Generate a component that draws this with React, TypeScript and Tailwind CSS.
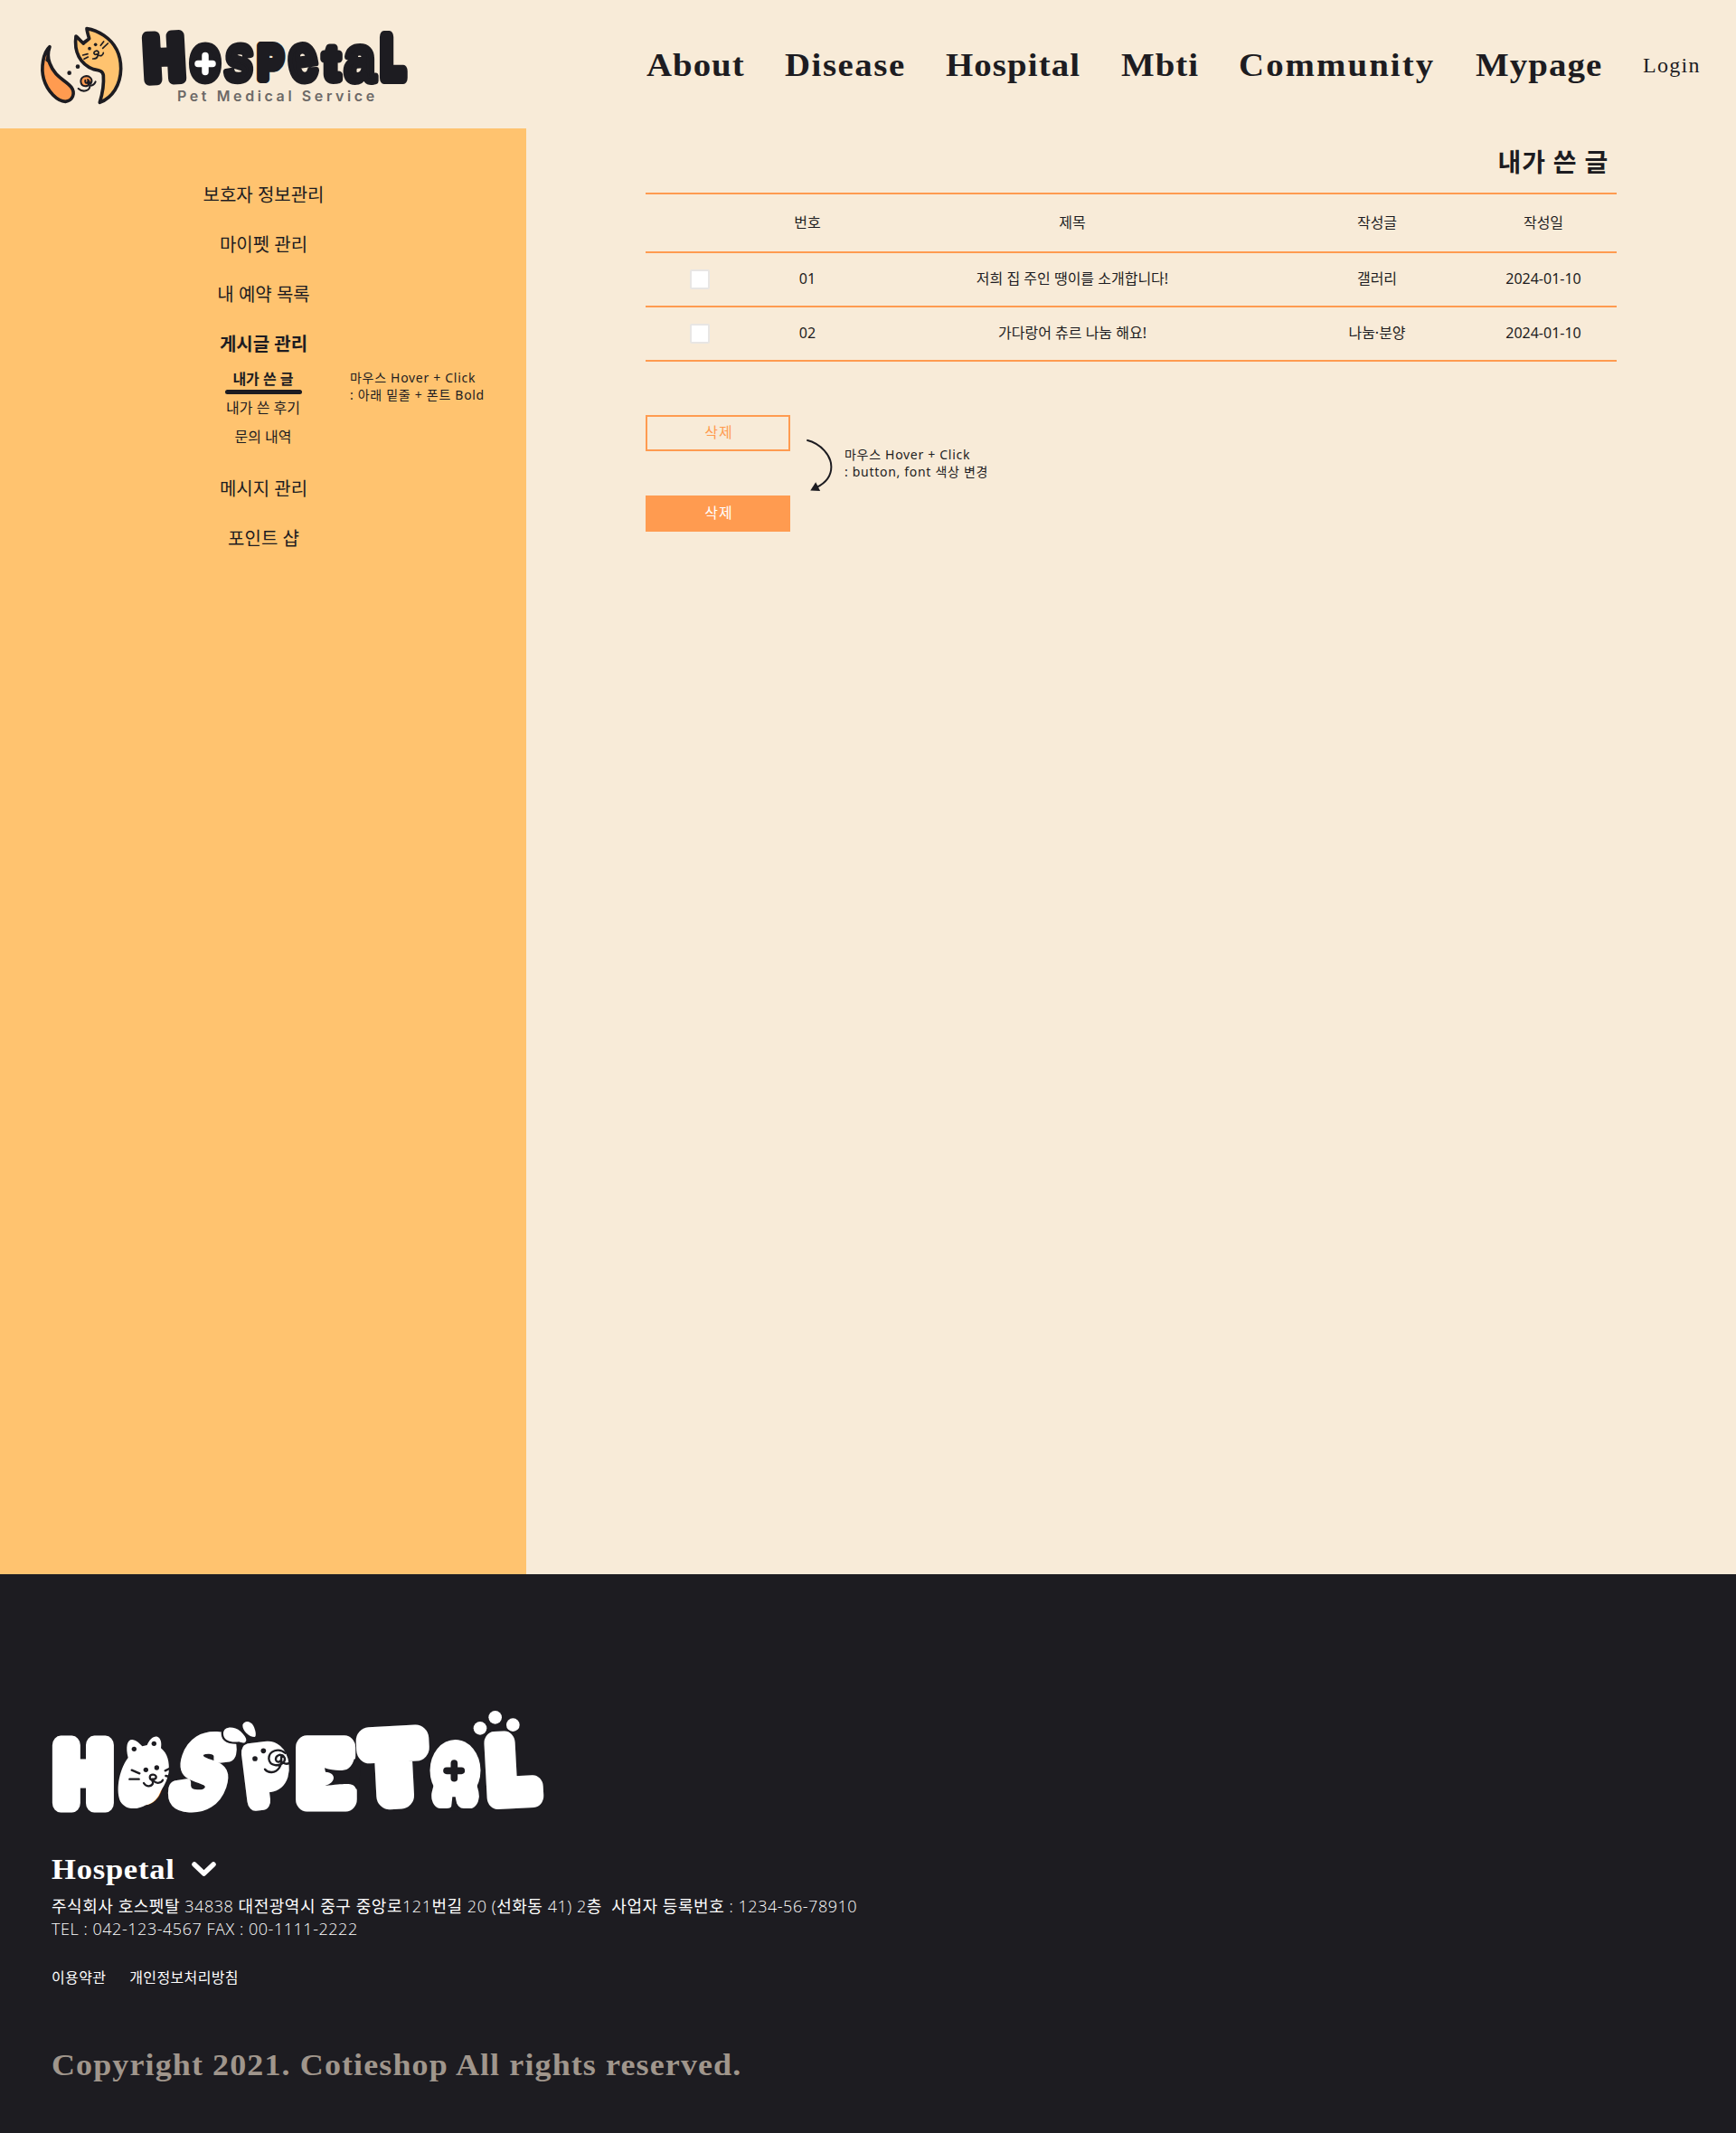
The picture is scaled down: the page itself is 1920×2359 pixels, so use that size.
import React from "react";

type Ink = [number, number, number];

/* Horizontal ink bounds and height of the bold sans letters, in em. */
const INK: Record<string, Ink> = {
  H: [0.067, 0.655, 0.688],
  O: [0.041, 0.736, 0.7],
  S: [0.03, 0.62, 0.7],
  P: [0.067, 0.62, 0.688],
  E: [0.067, 0.62, 0.688],
  T: [0.02, 0.59, 0.688],
  A: [0.0, 0.72, 0.688],
  L: [0.067, 0.585, 0.688],
  o: [0.04, 0.57, 0.54],
  s: [0.025, 0.52, 0.54],
  e: [0.035, 0.52, 0.54],
  t: [0.01, 0.32, 0.66],
  a: [0.035, 0.55, 0.54],
};

type LetterProps = {
  c: string;
  x: number;
  y: number;
  w: number;
  h: number;
  s: number;
  r?: number;
  k?: number;
};

/* One letter of a lettered logo, fitted into the box x, y, w, h. */
function Letter({ c, x, y, w, h, s, r = 0, k = 0 }: LetterProps) {
  const [a, b, cap] = INK[c];
  const size = (h - s) / cap;
  const sx = w / ((b - a) * size + s);
  const cx = x + w / 2;
  const cy = y + h / 2;
  const tx = -w / 2 - (a * size - s / 2) * sx;
  const ty = h / 2 - s / 2;
  return (
    <text
      transform={`translate(${cx} ${cy}) rotate(${r}) skewX(${k}) translate(${tx} ${ty}) scale(${sx} 1)`}
      fontSize={size}
      strokeWidth={s}
      strokeLinejoin="round"
      fontWeight={700}
      fill="currentColor"
      stroke="currentColor"
      className="font-['Liberation_Sans',sans-serif]"
    >
      {c}
    </text>
  );
}

function PetMark() {
  return (
    <svg viewBox="0 0 330 315" className="h-[105px] w-[110px] shrink-0" fill="none" stroke="#1d1c21" strokeLinecap="round" strokeLinejoin="round">
      <path
        d="M147 60 C154 65 160 74 172 84 C178 76 186 74 191 68 C188 58 184 46 183 35 C202 38 222 46 240 58 C278 84 296 124 296 168 C295 222 268 264 226 280 C238 240 240 214 238 190 C236 174 222 173 205 170 C160 152 140 112 147 60 Z"
        fill="#ffc36f"
        strokeWidth="11"
      />
      <path
        d="M60 95 C38 115 30 165 40 202 C52 244 86 276 112 277 C136 274 146 250 132 230 C112 204 78 198 60 150 C52 130 54 112 60 95 Z"
        fill="#ff9b50"
        strokeWidth="11"
      />
      <path d="M60 95 C54 112 52 130 60 150 L48 140 Z" fill="#1d1c21" strokeWidth="4" />
      <g fill="#1d1c21" stroke="none">
        <circle cx="125" cy="182" r="7" />
        <circle cx="153" cy="161" r="7" />
        <circle cx="192" cy="101" r="5.5" />
        <circle cx="212" cy="88" r="5.5" />
      </g>
      <g strokeWidth="5">
        <path d="M170 123 L186 119 M174 136 L187 129 M229 91 L239 78 M236 100 L253 84" />
        <path d="M220 121 C226 112 218 106 211 110 C203 115 208 123 215 120 C222 118 222 136 203 135" />
        <path d="M221 123 C230 128 238 123 238 115" />
      </g>
      <g strokeWidth="6">
        <path
          d="M196 218 C206 202 190 188 174 194 C158 201 160 224 178 226 C192 226 196 212 186 204"
          fill="#ff9b50"
        />
        <path d="M178 206 C176 216 182 219 186 211 C186 220 192 220 195 214 M155 234 C170 248 194 242 193 224 M193 224 C202 224 209 219 212 211" />
      </g>
    </svg>
  );
}

function HeaderWordmark() {
  return (
    <svg viewBox="-10 -20 320 106" className="mx-[-10px] mt-[-20px] mb-[-20px] h-[106px] w-[320px] overflow-visible text-[#1d1c21]" role="img" aria-label="Hospetal">
      <Letter c="H" x={4} y={4} w={47} h={60} s={13} r={-3} />
      <Letter c="o" x={55} y={16} w={36} h={47} s={10} />
      <Letter c="s" x={93} y={16} w={34} h={46} s={7} k={-4} />
      <Letter c="P" x={130} y={17} w={31} h={45} s={10} />
      <Letter c="e" x={164} y={16} w={34} h={47} s={7} r={-8} />
      <Letter c="t" x={200} y={18} w={25} h={44} s={9} />
      <Letter c="a" x={226} y={17} w={38} h={46} s={7} />
      <Letter c="L" x={266} y={5} w={31} h={58} s={14} />
      <path d="M73 31 V52 M64 41 H82" stroke="#1d1c21" strokeWidth="16" strokeLinecap="round" />
      <path d="M73 31.500 V49.500 M65 40.500 H81" stroke="#fff" strokeWidth="7.500" strokeLinecap="round" />
    </svg>
  );
}

function FooterWordmark() {
  return (
    <svg viewBox="50 1880 560 140" className="h-[140px] w-[560px] overflow-visible text-white" role="img" aria-label="Hospetal">
      <Letter c="H" x={58} y={1919} w={68} h={85} s={21} />
      <Letter c="O" x={136} y={1940} w={44} h={56} s={20} />
      <Letter c="S" x={193} y={1914} w={62} h={90} s={14} k={-16} r={3} />
      <Letter c="P" x={270} y={1926} w={50} h={75} s={22} r={-7} />
      <Letter c="E" x={327} y={1918} w={67} h={85} s={27} />
      <Letter c="T" x={396} y={1909} w={79} h={92} s={30} r={-3} />
      <ellipse cx={503.500} cy={1958} rx={28} ry={34} fill="#fff" />
      <Letter c="A" x={476} y={1925} w={55} h={75} s={28} />
      <Letter c="L" x={537} y={1914} w={63} h={86} s={26} r={-3} />

      <g transform="translate(50 1880) scale(.33333)">
        {/* cat */}
        <path
          d="M275 192 C266 155 272 130 290 132 C304 135 313 144 322 154 L338 150 C346 132 358 119 372 122 C384 127 387 142 384 160 C406 178 413 205 410 240 C404 280 374 324 336 347 C306 366 268 366 250 338 C234 306 242 236 275 192 Z"
          fill="#fff"
        />
        <g fill="#1d1c21">
          <circle cx="295" cy="163" r="8" />
          <circle cx="361" cy="145" r="8" />
          <circle cx="334" cy="232" r="8" />
          <circle cx="370" cy="225" r="8" />
          <circle cx="696" cy="195" r="8.500" />
          <circle cx="724" cy="169" r="8.500" />
        </g>
        <g fill="none" stroke="#1d1c21" strokeWidth="7" strokeLinecap="round" strokeLinejoin="round">
          <path d="M287 233 L313 244 M280 263 H311 M398 235 L412 228 M400 252 L412 255" />
          <path d="M359 267 C343 266 344 247 358 248 C373 250 370 264 357 263 C349 262 360 271 357 278 C350 290 334 288 327 276 M361 270 C370 279 386 276 390 266" />
          <path d="M788 188 C782 177 764 184 765 198 C768 212 787 206 783 188 C782 176 801 191 793 204 C778 224 744 220 742 195 C742 169 775 157 797 177 M783 196 C785 204 784 214 776 226 C763 244 740 244 729 230 M789 208 C798 214 808 212 814 207" />
        </g>
        {/* dog ears */}
        <g fill="#fff" stroke="#1d1c21" strokeWidth="14" paintOrder="stroke">
          <path d="M591 110 C593 88 625 86 648 104 C662 117 670 129 666 137 C662 145 653 143 643 139 C611 142 590 132 591 110 Z" />
          <path d="M655 83 C661 68 680 68 691 86 C699 103 701 119 695 123 C676 123 654 102 655 83 Z" />
        </g>
      </g>
      <g transform="translate(320 1880) scale(.33333)">
        <path d="M117 226 C145 235 180 238 195 228 C208 219 212 205 216 195 L236 210 L232 300 L221 295 C214 276 200 275 118 285 C155 275 158 242 120 239 Z" fill="#1d1c21" />
        <path d="M547 210 V260 M522 235 H571" stroke="#1d1c21" strokeWidth="23" strokeLinecap="round" />
        <path d="M536 368 L541 322 H551 L560 368 Z" fill="#1d1c21" />
        <circle cx="633" cy="94" r="22" fill="#fff" />
        <circle cx="683" cy="58" r="22" fill="#fff" />
        <circle cx="742" cy="83" r="22" fill="#fff" />
      </g>
    </svg>
  );
}

const stretch = "inline-block origin-left scale-x-[1.08]";

function Header() {
  return (
    <header className="flex h-[142px] text-[#1d1c21]">
      <div className="flex w-[714px] shrink-0 pt-5 pl-[35px]">
        <PetMark />
        <div className="ml-[9px] flex flex-col pt-[10px]">
          <HeaderWordmark />
          <span className="mt-[-2px] ml-[42px] font-['Inter',sans-serif] text-[16px] leading-[24px] font-semibold tracking-[3.6px] whitespace-nowrap text-[#6c6967]">
            Pet Medical Service
          </span>
        </div>
      </div>
      <nav className="flex h-[142px] items-center pt-[1px] pl-[1px] font-['Liberation_Serif',serif] text-[36px] font-bold whitespace-nowrap">
        <a className="w-[153px]"><span className={`${stretch} tracking-[0.9px]`}>About</span></a>
        <a className="w-[178px]"><span className={`${stretch} tracking-[1.4px]`}>Disease</span></a>
        <a className="w-[194px]"><span className={`${stretch} tracking-[1px]`}>Hospital</span></a>
        <a className="w-[130px]"><span className={`${stretch} tracking-[0.9px]`}>Mbti</span></a>
        <a className="w-[262px]"><span className={`${stretch} tracking-[1.9px]`}>Community</span></a>
        <a className="w-[185px]"><span className={`${stretch} tracking-[1px]`}>Mypage</span></a>
        <a className="text-[24px] font-normal tracking-[1.3px]">Login</a>
      </nav>
    </header>
  );
}

function Sidebar() {
  return (
    <aside className="relative flex w-[582px] shrink-0 flex-col items-center bg-[#ffc36f] pt-[46px] pl-[1px] text-[20px] text-[#1d1c21]">
      <a className="h-[55px] leading-[55px]">보호자 정보관리</a>
      <a className="h-[55px] leading-[55px]">마이펫 관리</a>
      <a className="h-[55px] leading-[55px]">내 예약 목록</a>
      <a className="h-[55px] leading-[55px] font-bold">게시글 관리</a>
      <div className="mt-[-1px] mr-[1px] flex h-[106px] flex-col items-center text-[16px]">
        <a className="flex h-[29px] w-[85px] flex-col items-center leading-[24px] font-bold">
          내가 쓴 글
          <span className="h-[5px] w-full shrink-0 rounded-full bg-[#1d1c21]" />
        </a>
        <a className="mt-[-1px] h-8 leading-8">내가 쓴 후기</a>
        <a className="h-8 leading-8">문의 내역</a>
      </div>
      <a className="h-[55px] leading-[55px]">메시지 관리</a>
      <a className="h-[55px] leading-[55px]">포인트 샵</a>
      <p className="absolute top-[266px] left-[387px] text-[14px] leading-[19px] tracking-[0.7px] whitespace-nowrap">
        마우스 Hover + Click
        <br />: 아래 밑줄 + 폰트 Bold
      </p>
    </aside>
  );
}

const rows = [
  { no: "01", title: "저희 집 주인 땡이를 소개합니다!", kind: "갤러리", date: "2024-01-10" },
  { no: "02", title: "가다랑어 츄르 나눔 해요!", kind: "나눔·분양", date: "2024-01-10" },
];

const grid = "grid grid-cols-[120px_118px_468px_206px_162px] items-center border-b-2 border-[#ff9b50] pb-[2px] text-center";

function Posts() {
  return (
    <main className="ml-[132px] w-[1074px] text-[#1d1c21]">
      <h1 className="h-[71px] pr-[9px] text-right text-[28px] leading-[75px] font-bold tracking-[0.8px]">내가 쓴 글</h1>
      <div className="border-t-2 border-[#ff9b50] text-[16px]">
        <div className={`${grid} h-[65px]`}>
          <span />
          <span>번호</span>
          <span>제목</span>
          <span>작성글</span>
          <span>작성일</span>
        </div>
        {rows.map((r) => (
          <div key={r.no} className={`${grid} h-[60px]`}>
            <span className="flex justify-center pt-[2px]">
              <span className="h-[22px] w-[22px] rounded-[2px] border-2 border-[#e8e6e4] bg-white" />
            </span>
            <span>{r.no}</span>
            <span>{r.title}</span>
            <span>{r.kind}</span>
            <span>{r.date}</span>
          </div>
        ))}
      </div>
      <div className="mt-[59px] flex">
        <div className="flex flex-col gap-[49px] text-[16px] tracking-[1px]">
          <button className="h-10 w-40 border-2 border-[#ff9b50] pb-[2px] pl-[2px] text-[#ff9b50]">삭제</button>
          <button className="h-10 w-40 bg-[#ff9b50] pb-[2px] pl-[2px] text-white">삭제</button>
        </div>
        <svg viewBox="570 130 100 190" className="mt-[24px] ml-[16px] h-[63px] w-[33px]" fill="none">
          <path d="M577 141 C625 153 659 193 659 230 C659 262 640 284 610 299" stroke="#1d1c21" strokeWidth="6" />
          <path d="M589 310 L607 282 L622 311 Z" fill="#1d1c21" />
        </svg>
        <p className="mt-[34px] ml-[11px] text-[14px] leading-[19px] tracking-[0.7px] whitespace-nowrap">
          마우스 Hover + Click
          <br />: button, font 색상 변경
        </p>
      </div>
    </main>
  );
}

const address = "주식회사 호스펫탈 34838 대전광역시 중구 중앙로121번길 20 (선화동 41) 2층  사업자 등록번호 : 1234-56-78910";

function Footer() {
  return (
    <footer className="flex h-[618px] flex-col bg-[#1d1c21] pl-[57px] text-white">
      <div className="mt-[139px] ml-[-7px] h-[140px]">
        <FooterWordmark />
      </div>
      <div className="mt-[23px] flex h-[48px] items-center font-['Liberation_Serif',serif] text-[32px] font-bold">
        <span className="w-[155px]">
          <span className={`${stretch} tracking-[0.7px]`}>Hospetal</span>
        </span>
        <svg viewBox="0 0 27 16" className="h-4 w-[27px]" fill="none">
          <path d="M3 3 L13.500 13 L24 3" stroke="#fff" strokeWidth="5.500" strokeLinecap="round" strokeLinejoin="round" />
        </svg>
      </div>
      <div className="mt-[5px] font-['Open_Sans','Noto_Sans_CJK_KR',sans-serif] text-[18px] leading-[25px] font-light tracking-[0.54px] whitespace-pre">
        <p className="h-[25px]">
          {address.split(/([가-힣]+)/).map((part, i) => (
            <span key={i} className={i % 2 ? "font-normal" : "font-light"}>
              {part}
            </span>
          ))}
        </p>
        <p>TEL : 042-123-4567 FAX : 00-1111-2222</p>
      </div>
      <div className="mt-[29px] flex gap-[26px] text-[16px] leading-[24px] tracking-[0.35px]">
        <a>이용약관</a>
        <a>개인정보처리방침</a>
      </div>
      <p className="mt-[65px] font-['Liberation_Serif',serif] text-[34px] leading-[40px] font-bold whitespace-nowrap text-[#a0968c]">
        <span className="inline-block origin-left scale-x-[1.06] tracking-[1.03px]">Copyright 2021. Cotieshop All rights reserved.</span>
      </p>
    </footer>
  );
}

export default function App() {
  return (
    <div className="w-[1920px] bg-[#f8ebd8] font-['Noto_Sans','Noto_Sans_CJK_KR',sans-serif]">
      <Header />
      <div className="flex h-[1599px]">
        <Sidebar />
        <Posts />
      </div>
      <Footer />
    </div>
  );
}
